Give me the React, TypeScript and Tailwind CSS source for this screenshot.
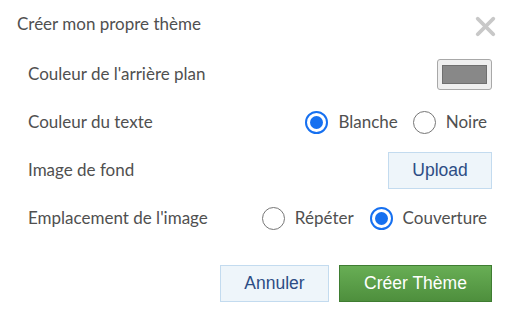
import { X } from "lucide-react";

const Radio = ({ checked }: { checked?: boolean }) =>
  checked ? (
    <span className="flex h-[23px] w-[23px] items-center justify-center rounded-full border-2 border-[#1670f0] bg-white">
      <span className="h-[13px] w-[13px] rounded-full bg-[#1670f0]" />
    </span>
  ) : (
    <span className="h-[23px] w-[23px] rounded-full border-[1.5px] border-[#767676] bg-white" />
  );

const Option = ({ label, checked }: { label: string; checked?: boolean }) => (
  <label className="flex items-center gap-[10px]">
    <Radio checked={checked} />
    <span>{label}</span>
  </label>
);

const Row = ({ label, children }: { label: string; children: React.ReactNode }) => (
  <div className="flex h-12 items-center justify-between">
    <span>{label}</span>
    {children}
  </div>
);

export default function App() {
  return (
    <div
      className="w-[514px] h-[324px] bg-white text-[17px] text-[#505050]"
      style={{ fontFamily: "Lato, 'Liberation Sans', sans-serif" }}
    >
      {/* Header */}
      <div className="flex h-[47px] items-center justify-between pl-[17px] pr-[13px]">
        <h1 className="text-[17px] font-normal">Créer mon propre thème</h1>
        <X size={31} strokeWidth={3} className="mt-[5px] text-[#c8c8c8]" />
      </div>

      {/* Options */}
      <div className="pl-[28px] pr-[22px] pt-[3px]">
        <Row label="Couleur de l'arrière plan">
          <div className="flex h-[31px] w-[55px] items-center justify-center rounded-[3px] border border-[#a8a8a8] bg-[#efefef]">
            <div className="h-[19px] w-[45px] border border-[#6f6f6f] bg-[#888888]" />
          </div>
        </Row>
        <Row label="Couleur du texte">
          <div className="mr-[5px] flex items-center gap-[15px]">
            <Option label="Blanche" checked />
            <Option label="Noire" />
          </div>
        </Row>
        <Row label="Image de fond">
          <button className="h-[37px] w-[104px] border border-[#c3dbef] bg-[#eef5fa] text-[17.5px] text-[#2d4d85] [font-family:'Liberation_Sans',Arial,sans-serif]">
            Upload
          </button>
        </Row>
        <Row label="Emplacement de l'image">
          <div className="mr-[5px] flex items-center gap-[16px]">
            <Option label="Répéter" />
            <Option label="Couverture" checked />
          </div>
        </Row>
      </div>

      {/* Footer */}
      <div className="mt-[23px] flex justify-end gap-[10px] pr-[22px] text-[17.5px] [font-family:'Liberation_Sans',Arial,sans-serif]">
        <button className="h-[37px] w-[109px] border border-[#c3dbef] bg-[#eef5fa] text-[#2d4d85]">
          Annuler
        </button>
        <button className="h-[37px] w-[153px] border border-[#3f7d32] bg-gradient-to-b from-[#68ae55] to-[#4e8f3d] text-white">
          Créer Thème
        </button>
      </div>
    </div>
  );
}
